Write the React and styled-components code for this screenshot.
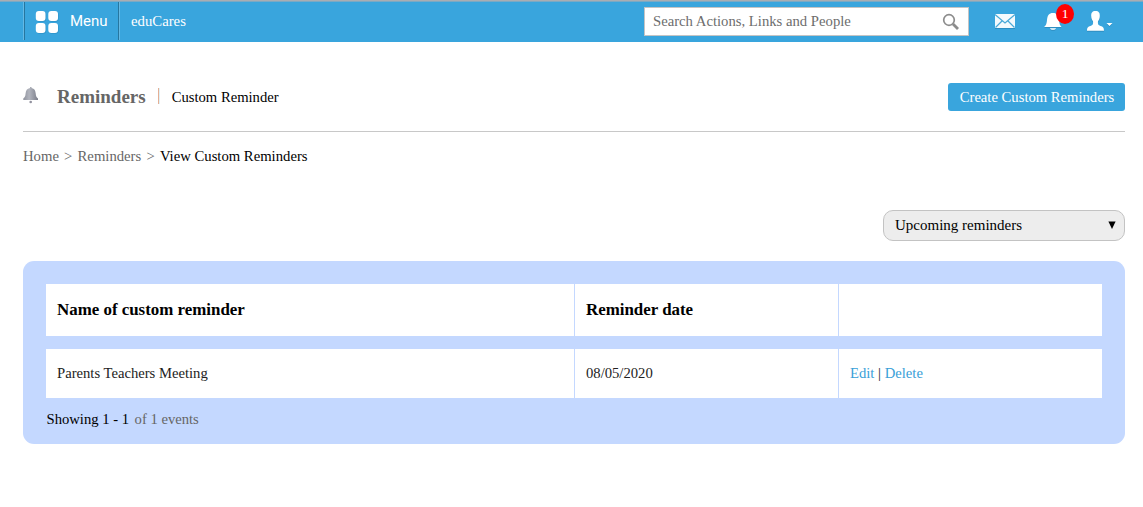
import React from "react";
import styled, { createGlobalStyle } from "styled-components";

const GlobalStyle = createGlobalStyle`
  * { box-sizing: border-box; }
  body {
    margin: 0;
    background: #fff;
    color: #000;
    font: 14.65px/20px "Liberation Serif", "Times New Roman", serif;
    white-space: nowrap;
  }
`;

const TopBar = styled.header`
  display: flex;
  align-items: flex-start;
  height: 42px;
  padding-left: 23px;
  background: #39a5dd;
  border-top: 1px solid #a9adb2;
  box-shadow: inset 0 1px #7ba9c4;
  color: #fff;
`;

const MenuButton = styled.div`
  display: flex;
  align-items: center;
  width: 97px;
  height: 38px;
  margin-top: 1px;
  padding-left: 10px;
  border-left: 1px solid #63b9e5;
  border-right: 1px solid #63b9e5;
  box-shadow: inset 1px 0 #26769f, inset -1px 0 #26769f;
  font: 15px/20px Roboto, sans-serif;
`;

const MenuLabel = styled.span`
  margin: -1px 0 0 1px;
`;

const MenuIcon = styled.svg`
  margin: 2px 11px 0 -1px;
  overflow: visible;
`;

const Brand = styled.div`
  flex: 1;
  padding: 10px 0 0 11px;
  font-size: 14.75px;
`;

const SearchBox = styled.div`
  display: flex;
  align-items: center;
  justify-content: space-between;
  width: 325px;
  height: 29px;
  margin-top: 6px;
  padding: 0 8px;
  background: #fff;
  border: 1px solid #c4c4c4;
  color: #6d6d6d;
`;

const SearchText = styled.span`
  margin-top: -1px;
  font-size: 14.7px;
`;

const Tools = styled.div`
  display: flex;
  width: 174px;
  padding: 8px 0 0 25px;
`;

const ToolIcon = styled.svg`
  margin-right: ${(p) => p.$gap || 0}px;
  overflow: visible;
  filter: drop-shadow(0 1px 0 rgba(20, 90, 130, 0.3));
`;

const BellHolder = styled.div`
  position: relative;
  width: 43px;
  height: 26px;
`;

const Badge = styled.span`
  position: absolute;
  left: 12px;
  top: -5px;
  width: 18px;
  height: 20px;
  border-radius: 50%;
  background: #f00;
  font-size: 13.5px;
  text-align: center;
`;

const Page = styled.main`
  padding: 34px 18px 0 23px;
`;

const TitleRow = styled.div`
  display: flex;
  align-items: flex-start;
  height: 56px;
  padding-top: 7px;
  border-bottom: 1px solid #c8c8c8;
`;

const Title = styled.h1`
  margin: 2px 12px 0 18px;
  color: #666;
  font-size: 19px;
  line-height: 23px;
`;

const TitleRule = styled.span`
  width: 2px;
  height: 16px;
  margin: 5px 12px 0 0;
  background: linear-gradient(90deg, #e5af94 50%, #dff1f7 50%);
`;

const Subtitle = styled.span`
  flex: 1;
  padding-top: 4px;
`;

const CreateButton = styled.button`
  width: 177px;
  height: 28px;
  padding: 0 0 0 1px;
  border: 0;
  border-radius: 3px;
  background: #39a5dd;
  color: #fff;
  font: inherit;
`;

const Breadcrumb = styled.nav`
  display: flex;
  gap: 5.2px;
  padding-top: 14px;
  color: #666;
  font-size: 14.7px;
`;

const Current = styled.span`
  color: #000;
`;

const Filter = styled.div`
  display: flex;
  align-items: center;
  justify-content: space-between;
  width: 242px;
  height: 31px;
  margin: 44px 0 20px auto;
  padding: 0 8px 2px 11px;
  border: 1px solid #c3c3c3;
  border-radius: 10px;
  background: #ededed;
  font-size: 15px;
`;

const Panel = styled.section`
  height: 183px;
  padding: 23px 23px 0;
  border-radius: 11px;
  background: #c4d8ff;
`;

const Row = styled.div`
  display: grid;
  grid-template-columns: 528px 263px 263px;
  gap: 1px;
  height: ${(p) => (p.$head ? 52 : 49)}px;
  margin-bottom: ${(p) => (p.$head ? 13 : 11)}px;
  color: ${(p) => (p.$head ? "#000" : "#222")};
  font-size: ${(p) => (p.$head ? "16.9px" : "inherit")};
  font-weight: ${(p) => (p.$head ? "bold" : "normal")};
`;

const Cell = styled.div`
  display: flex;
  align-items: center;
  gap: 3.7px;
  padding: 0 0 1px 11px;
  background: #fff;
`;

const Action = styled.a`
  color: #39a0d8;
`;

const Summary = styled.div`
  padding-left: 0.5px;
  color: #000;
`;

const Muted = styled.span`
  margin-left: 5.5px;
  color: #666;
`;

export default function App() {
  return (
    <>
      <GlobalStyle />
      <TopBar>
        <MenuButton>
          <MenuIcon width="25" height="24" viewBox="0 0 25 24" fill="#fff">
            <g fill="#2482b4" opacity=".5" transform="translate(.6 .8)">
              <rect x="2.800" y="1" width="9.700" height="10" rx="3" />
              <rect x="15.300" y="1" width="9.700" height="10" rx="3" />
              <rect x="2.800" y="13" width="9.700" height="10" rx="3" />
              <rect x="15.300" y="13" width="9.700" height="10" rx="3" />
            </g>
            <rect x="2.800" y="1" width="9.700" height="10" rx="3" />
            <rect x="15.300" y="1" width="9.700" height="10" rx="3" />
            <rect x="2.800" y="13" width="9.700" height="10" rx="3" />
            <rect x="15.300" y="13" width="9.700" height="10" rx="3" />
          </MenuIcon>
          <MenuLabel>Menu</MenuLabel>
        </MenuButton>
        <Brand>eduCares</Brand>
        <SearchBox>
          <SearchText>Search Actions, Links and People</SearchText>
          <svg width="18" height="18" viewBox="0 0 18 18" fill="none" stroke="#8c8c8c">
            <circle cx="7" cy="7" r="5.300" strokeWidth="1.7" />
            <path d="M11 11l5 5" strokeWidth="2.8" />
          </svg>
        </SearchBox>
        <Tools>
          <ToolIcon $gap={28} width="22" height="26" viewBox="0 0 22 26">
            <rect x="1" y="5" width="20" height="14" fill="#f4fafd" />
            <path d="M1 5.500l10 8.500 10-8.500M1.500 18.500l7-7M20.500 18.500l-7-7" fill="none" stroke="#4aa9d8" strokeWidth="1.2" />
          </ToolIcon>
          <BellHolder>
            <ToolIcon width="20" height="24" viewBox="0 0 20 24" fill="#fff">
              <path d="M0 18c2-1.500 2.600-3 3-7C3.400 6.500 5 4 9 4s5.500 2.500 6 7c.4 4 1 5.500 2.500 7zM6 19.300h6c-.6 2-5.400 2-6 0z" />
            </ToolIcon>
            <Badge>1</Badge>
          </BellHolder>
          <ToolIcon width="28" height="26" viewBox="0 0 28 26" fill="#fff">
            <path d="M8.500 2c3.300 0 4.500 2 4.300 5-.1 2.500-.8 4-1.800 5.200-.4 2.800.2 4 2.500 4.800 2.500.8 3.500 1.500 3.500 4.800H0c0-3.300 1-4 3.500-4.800 2.300-.8 2.900-2 2.500-4.800C5 11 4.300 9.500 4.200 7 4 4 5.200 2 8.500 2z" />
            <path d="M19.500 14h6l-3 3z" />
          </ToolIcon>
        </Tools>
      </TopBar>
      <Page>
        <TitleRow>
          <svg width="16" height="24" viewBox="0 0 16 24">
            <defs>
              <linearGradient id="bellTone" x1="0" x2="1">
                <stop offset="0" stopColor="#8f929d" />
                <stop offset=".4" stopColor="#b2b5be" />
                <stop offset="1" stopColor="#7c7f8b" />
              </linearGradient>
            </defs>
            <path fill="url(#bellTone)" d="M7 4h1.500v1c3 .5 3.900 2.500 4.200 5.500.2 2.500.6 3.500 2.300 5V17H.3v-1.500c1.700-1.500 2.100-2.500 2.300-5C2.900 7.500 4 5.500 7 5z" />
            <circle cx="7.700" cy="19" r="1.300" fill="#92929f" />
          </svg>
          <Title>Reminders</Title>
          <TitleRule />
          <Subtitle>Custom Reminder</Subtitle>
          <CreateButton>Create Custom Reminders</CreateButton>
        </TitleRow>
        <Breadcrumb>
          <span>Home</span>
          <span>&gt;</span>
          <span>Reminders</span>
          <span>&gt;</span>
          <Current>View Custom Reminders</Current>
        </Breadcrumb>
        <Filter>
          Upcoming reminders
          <svg width="8" height="8" viewBox="0 0 8 8">
            <path d="M.4.500h7.200L4 8z" />
          </svg>
        </Filter>
        <Panel>
          <Row $head>
            <Cell>Name of custom reminder</Cell>
            <Cell>Reminder date</Cell>
            <Cell />
          </Row>
          <Row>
            <Cell>Parents Teachers Meeting</Cell>
            <Cell>08/05/2020</Cell>
            <Cell>
              <Action>Edit</Action>
              <span>|</span>
              <Action>Delete</Action>
            </Cell>
          </Row>
          <Summary>
            Showing 1 - 1<Muted>of 1 events</Muted>
          </Summary>
        </Panel>
      </Page>
    </>
  );
}
